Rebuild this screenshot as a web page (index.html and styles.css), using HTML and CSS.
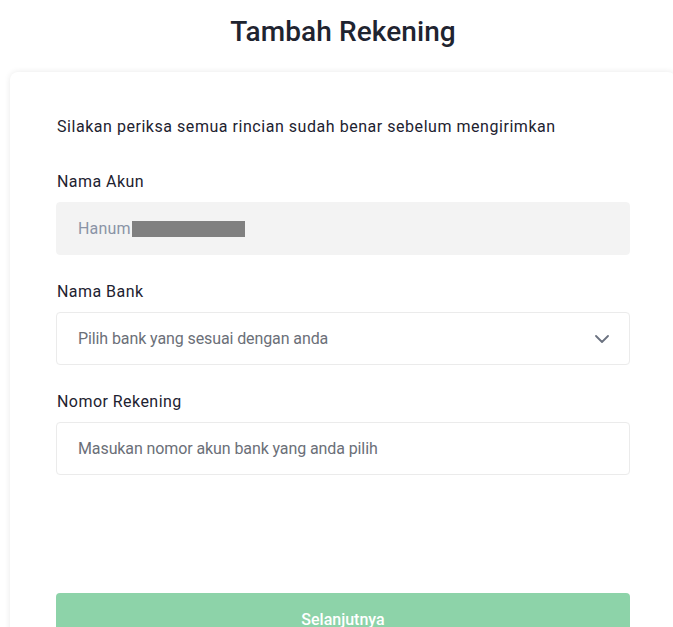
FILE: index.html
```
<!DOCTYPE html>
<html lang="id">
<head>
<meta charset="utf-8">
<title>Tambah Rekening</title>
<link rel="stylesheet" href="styles.css">
</head>
<body>
<div class="page">
  <h1 class="title">Tambah Rekening</h1>
  <div class="card">
    <p class="desc">Silakan periksa semua rincian sudah benar sebelum mengirimkan</p>
    <div class="fields">
      <div class="field">
        <label class="label">Nama Akun</label>
        <div class="input input-disabled"><span class="value">Hanum</span><span class="redact"></span></div>
      </div>
      <div class="field">
        <label class="label">Nama Bank</label>
        <div class="input select">
          <span class="placeholder">Pilih bank yang sesuai dengan anda</span>
          <svg class="chevron" width="14" height="8" viewBox="0 0 14 8"><path d="M1 1l6 6 6-6" fill="none" stroke="#6b7280" stroke-width="1.8" stroke-linecap="round" stroke-linejoin="round"/></svg>
        </div>
      </div>
      <div class="field">
        <label class="label">Nomor Rekening</label>
        <div class="input"><span class="placeholder">Masukan nomor akun bank yang anda pilih</span></div>
      </div>
    </div>
    <button class="btn">Selanjutnya</button>
  </div>
</div>
</body>
</html>
```
FILE: styles.css
```
html, body {
  margin: 0;
  padding: 0;
  background: #ffffff;
  overflow: hidden;
}
body {
  font-family: Roboto, "Liberation Sans", sans-serif;
  color: #1d2230;
}
.page {
  width: 686px;
  display: flex;
  flex-direction: column;
}
.title {
  margin: 0;
  height: 72px;
  padding-top: 12px;
  box-sizing: border-box;
  text-align: center;
  font-size: 28px;
  line-height: 40px;
  font-weight: 500;
  letter-spacing: 0.1px;
  color: #1f2430;
}
.card {
  margin-left: 10px;
  width: 666px;
  box-sizing: border-box;
  padding: 43px 46px 0 46px;
  border-radius: 8px;
  box-shadow: 0 0 6px rgba(0, 0, 0, 0.09);
  display: flex;
  flex-direction: column;
  min-height: 600px;
}
.desc {
  margin: 0 0 31px 1px;
  font-size: 16px;
  line-height: 24px;
  letter-spacing: 0.54px;
  color: #1d2230;
}
.fields {
  display: flex;
  flex-direction: column;
  gap: 25px;
}
.field {
  display: flex;
  flex-direction: column;
  gap: 8px;
}
.label {
  font-size: 16px;
  line-height: 24px;
  letter-spacing: 0.45px;
  color: #1d2230;
  padding-left: 1px;
}
.input {
  height: 53px;
  box-sizing: border-box;
  border: 1px solid #ebebeb;
  border-radius: 4px;
  padding: 0 21px;
  display: flex;
  align-items: center;
  font-size: 16px;
  letter-spacing: -0.1px;
  color: #6b6f78;
}
.input-disabled {
  background: #f3f3f3;
  border-color: #f3f3f3;
}
.value {
  color: #8a93a6;
  letter-spacing: 0.2px;
}
.redact {
  display: inline-block;
  width: 113px;
  height: 16px;
  background: #808080;
  margin-left: 1px;
}
.select {
  justify-content: space-between;
}
.chevron {
  margin-right: -1px;
}
.btn {
  margin-top: 118px;
  height: 52px;
  border: none;
  border-radius: 4px;
  background: #8dd3a9;
  color: #ffffff;
  font-family: inherit;
  font-size: 16px;
  font-weight: 500;
  padding: 0;
}
```
